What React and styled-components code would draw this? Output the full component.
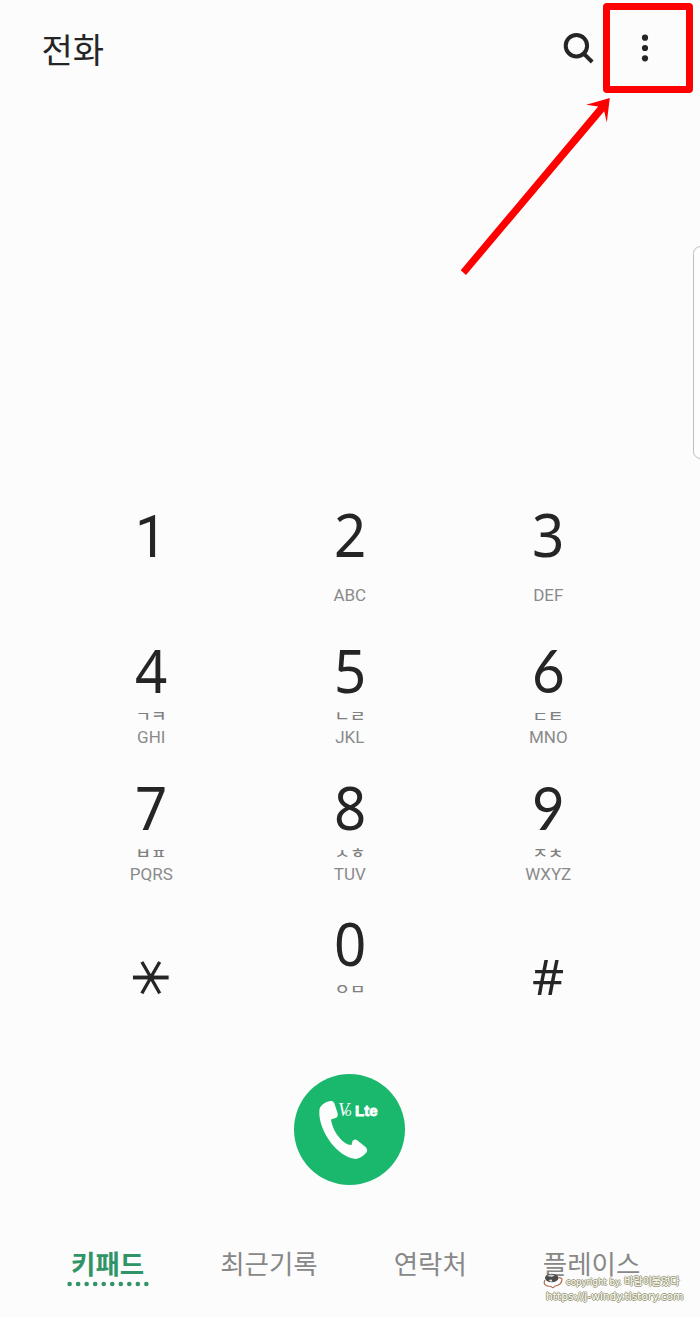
import React from "react";
import styled, { createGlobalStyle } from "styled-components";

const keys = [
  { digit: "1", font: "Roboto" },
  { digit: "2", latin: "ABC" },
  { digit: "3", latin: "DEF" },
  { digit: "4", jamo: "ㄱㅋ", latin: "GHI" },
  { digit: "5", jamo: "ㄴㄹ", latin: "JKL" },
  { digit: "6", jamo: "ㄷㅌ", latin: "MNO", font: "Lato" },
  { digit: "7", jamo: "ㅂㅍ", latin: "PQRS" },
  { digit: "8", jamo: "ㅅㅎ", latin: "TUV" },
  { digit: "9", jamo: "ㅈㅊ", latin: "WXYZ", font: "Lato" },
  { symbol: "⚹", star: true },
  { digit: "0", jamo: "ㅇㅁ" },
  { symbol: "#" },
];

const tabs = ["키패드", "최근기록", "연락처", "플레이스"];

const App = () => {
  return (
    <>
      <GlobalStyle />
      <Screen>
        <Header>
          <h1>전화</h1>
          <IconButton aria-label="search">
            <svg width="32" height="32" viewBox="0 0 32 32" fill="none">
              <circle cx="13.4" cy="13.7" r="10.7" stroke="#252525" strokeWidth="4" />
              <path d="M20.5 21.3 29.2 30" stroke="#252525" strokeWidth="4" />
            </svg>
          </IconButton>
          <MoreButton aria-label="more">
            <svg width="8" height="30" viewBox="0 0 8 30" fill="#252525">
              <circle cx="4" cy="4.7" r="3.1" />
              <circle cx="4" cy="15" r="3.1" />
              <circle cx="4" cy="25.3" r="3.1" />
            </svg>
          </MoreButton>
        </Header>
        <Arrow width="160" height="190" viewBox="455 90 160 190">
          <path
            d="M460.7 270.3 466 275 604.2 111.2 606.8 122.5 609.8 98 586.2 104.8 598.2 106.4Z"
            fill="#fe0000"
          />
        </Arrow>
        <EdgeHandle />
        <Keypad>
          {keys.map((key, index) => (
            <Key key={index}>
              {key.digit && <Digit $font={key.font}>{key.digit}</Digit>}
              {key.symbol && <Symbol $star={key.star}>{key.symbol}</Symbol>}
              {key.jamo && <Jamo>{key.jamo}</Jamo>}
              {key.latin && <Latin $alone={!key.jamo}>{key.latin}</Latin>}
            </Key>
          ))}
        </Keypad>
        <CallButton aria-label="call">
          <svg width="111" height="111" viewBox="0 0 111 111">
            <path
              d="M26 33.5Q31 26.5 37.8 27Q39.5 27.3 40.3 29.2L43.6 39Q44.2 43.5 41.5 44L37 45.5C38.5 56 45.5 66.5 54 70.5L57.5 71L58.5 67Q60 64.7 62.5 65.7L71 72.5Q74 75 72.8 78Q68 84 61.5 85C43 83 25 57 25.3 38Q25.3 35 26 33.5Z"
              fill="#fdfdfd"
            />
          </svg>
          <VoLabel>
            V<small>o</small>
          </VoLabel>
          <LteLabel>Lte</LteLabel>
        </CallButton>
        <TabBar>
          {tabs.map((tab, index) => (
            <Tab key={tab} $active={index === 0}>
              {tab}
              {index === 0 && (
                <svg width="82" height="6" viewBox="0 0 82 6" fill="#2f9468">
                  {[...Array(10)].map((_, dot) => (
                    <circle key={dot} cx={2.6 + dot * 8.53} cy="3" r="2.3" />
                  ))}
                </svg>
              )}
            </Tab>
          ))}
        </TabBar>
        <Copyright>
          <div className="line">
            <svg width="20" height="17" viewBox="0 0 20 17">
              <path
                d="M2 8Q-1 14 8 14.5Q10 17 12 14Q19 13 19 7Q15 4 14 8"
                fill="#fff"
                stroke="#b56b50"
                strokeWidth="1.2"
              />
              <ellipse cx="8.7" cy="6" rx="6.7" ry="4.2" fill="#4a4a4a" />
              <path d="M4 4 7 2.5 12 3 9 5Z" fill="#ccc" />
              <path d="M6 8 8.5 7.5 9.5 9.5 7 9.5Z" fill="#eee" />
            </svg>
            <span>
              copyright by. <b>바람이불었다</b>
            </span>
          </div>
          <p>https://j-windy.tistory.com</p>
        </Copyright>
      </Screen>
    </>
  );
};

const GlobalStyle = createGlobalStyle`
  * {
    box-sizing: border-box;
  }
  body {
    margin: 0;
    background: #fcfcfc;
  }
  button {
    padding: 0;
    border: none;
    background: none;
    font: inherit;
    color: inherit;
  }
`;

const Screen = styled.main`
  position: relative;
  display: flex;
  flex-direction: column;
  width: 700px;
  height: 1317px;
  overflow: hidden;
  background: #fcfcfc;
  color: #252525;
  font-family: "Noto Sans CJK KR", sans-serif;
`;

const Header = styled.header`
  display: flex;
  align-items: flex-start;
  height: 468px;
  padding: 3px 7px 0 41.5px;
  h1 {
    flex: 1;
    margin: 22px 0 0;
    font-size: 34px;
    font-weight: 400;
    line-height: 48px;
  }
`;

const IconButton = styled.button`
  display: flex;
  margin: 29px 8px 0 0;
`;

const MoreButton = styled.button`
  display: flex;
  align-items: center;
  justify-content: center;
  width: 90px;
  height: 90px;
  border: 7px solid #fe0000;
  border-radius: 4px;
  padding-right: 6px;
`;

const Arrow = styled.svg`
  position: absolute;
  top: 90px;
  left: 455px;
`;

const EdgeHandle = styled.div`
  position: absolute;
  top: 246px;
  right: -8px;
  width: 15px;
  height: 213px;
  border: 1px solid #bdbdbd;
  border-radius: 10px;
  background: #fdfdfd;
`;

const Keypad = styled.section`
  display: grid;
  grid-template-columns: repeat(3, 198.5px);
  grid-auto-rows: 136.4px;
  height: 577px;
  margin-left: 52px;
  padding-top: 30px;
`;

const Key = styled.button`
  display: flex;
  flex-direction: column;
  align-items: center;
`;

const Digit = styled.span`
  height: 72px;
  font-family: ${(props) => props.$font || '"Noto Sans"'}, sans-serif;
  font-size: 60px;
  line-height: ${(props) => (props.$font === "Roboto" ? "78px" : "72px")};
  transform: scaleX(0.94);
`;

const Symbol = styled.span`
  margin-top: ${(props) => (props.$star ? "32px" : "36px")};
  font-family: ${(props) => (props.$star ? '"DejaVu Sans"' : '"Noto Sans"')},
    sans-serif;
  font-size: ${(props) => (props.$star ? "66px" : "50px")};
  line-height: 66px;
  -webkit-text-stroke: ${(props) => (props.$star ? "1.2px #fcfcfc" : "0")};
`;

const Jamo = styled.span`
  height: 20px;
  color: #808080;
  font-size: 14px;
  font-weight: 500;
  line-height: 18px;
  transform: scale(1.2, 0.95);
`;

const Latin = styled.span`
  margin-top: ${(props) => (props.$alone ? "14px" : "0")};
  color: #8a8a8a;
  font-family: Roboto, sans-serif;
  font-size: 17px;
  line-height: 22px;
`;

const CallButton = styled.button`
  position: relative;
  align-self: center;
  width: 111px;
  height: 111px;
  margin: 29px 1px 0 0;
  border-radius: 50%;
  background: #19b86c;
  color: #fdfdfd;
  svg {
    display: block;
  }
`;

const VoLabel = styled.span`
  position: absolute;
  top: 26px;
  left: 44px;
  font-family: "Liberation Serif", serif;
  font-size: 18px;
  font-style: italic;
  line-height: 20px;
  small {
    margin-left: -4px;
    font-size: 13px;
  }
`;

const LteLabel = styled.span`
  position: absolute;
  top: 27px;
  left: 61px;
  font-family: "Liberation Sans", sans-serif;
  font-size: 15px;
  font-weight: 700;
  line-height: 20px;
  -webkit-text-stroke: 0.8px #fdfdfd;
`;

const TabBar = styled.nav`
  display: grid;
  grid-template-columns: repeat(4, 161.3px);
  margin: 59px 0 0 27px;
`;

const Tab = styled.button`
  display: flex;
  flex-direction: column;
  align-items: center;
  color: ${(props) => (props.$active ? "#2f9468" : "#888")};
  font-size: 26.5px;
  font-weight: ${(props) => (props.$active ? "700" : "400")};
  line-height: 37px;
`;

const Copyright = styled.footer`
  position: absolute;
  top: 1272px;
  left: 543px;
  color: #fffff0;
  font-family: "DejaVu Sans", "Noto Sans CJK KR", sans-serif;
  font-size: 10.7px;
  white-space: nowrap;
  text-shadow: 0 1px #9a9a7e, 1px 0 #9a9a7e, 0 -1px #9a9a7e, -1px 0 #9a9a7e;
  .line {
    display: flex;
    align-items: center;
    gap: 3px;
    height: 17px;
    font-size: 8.6px;
  }
  b {
    font-size: 10px;
    font-weight: 400;
  }
  p {
    margin: 0 0 0 3px;
    line-height: 16px;
  }
`;

export default App;
